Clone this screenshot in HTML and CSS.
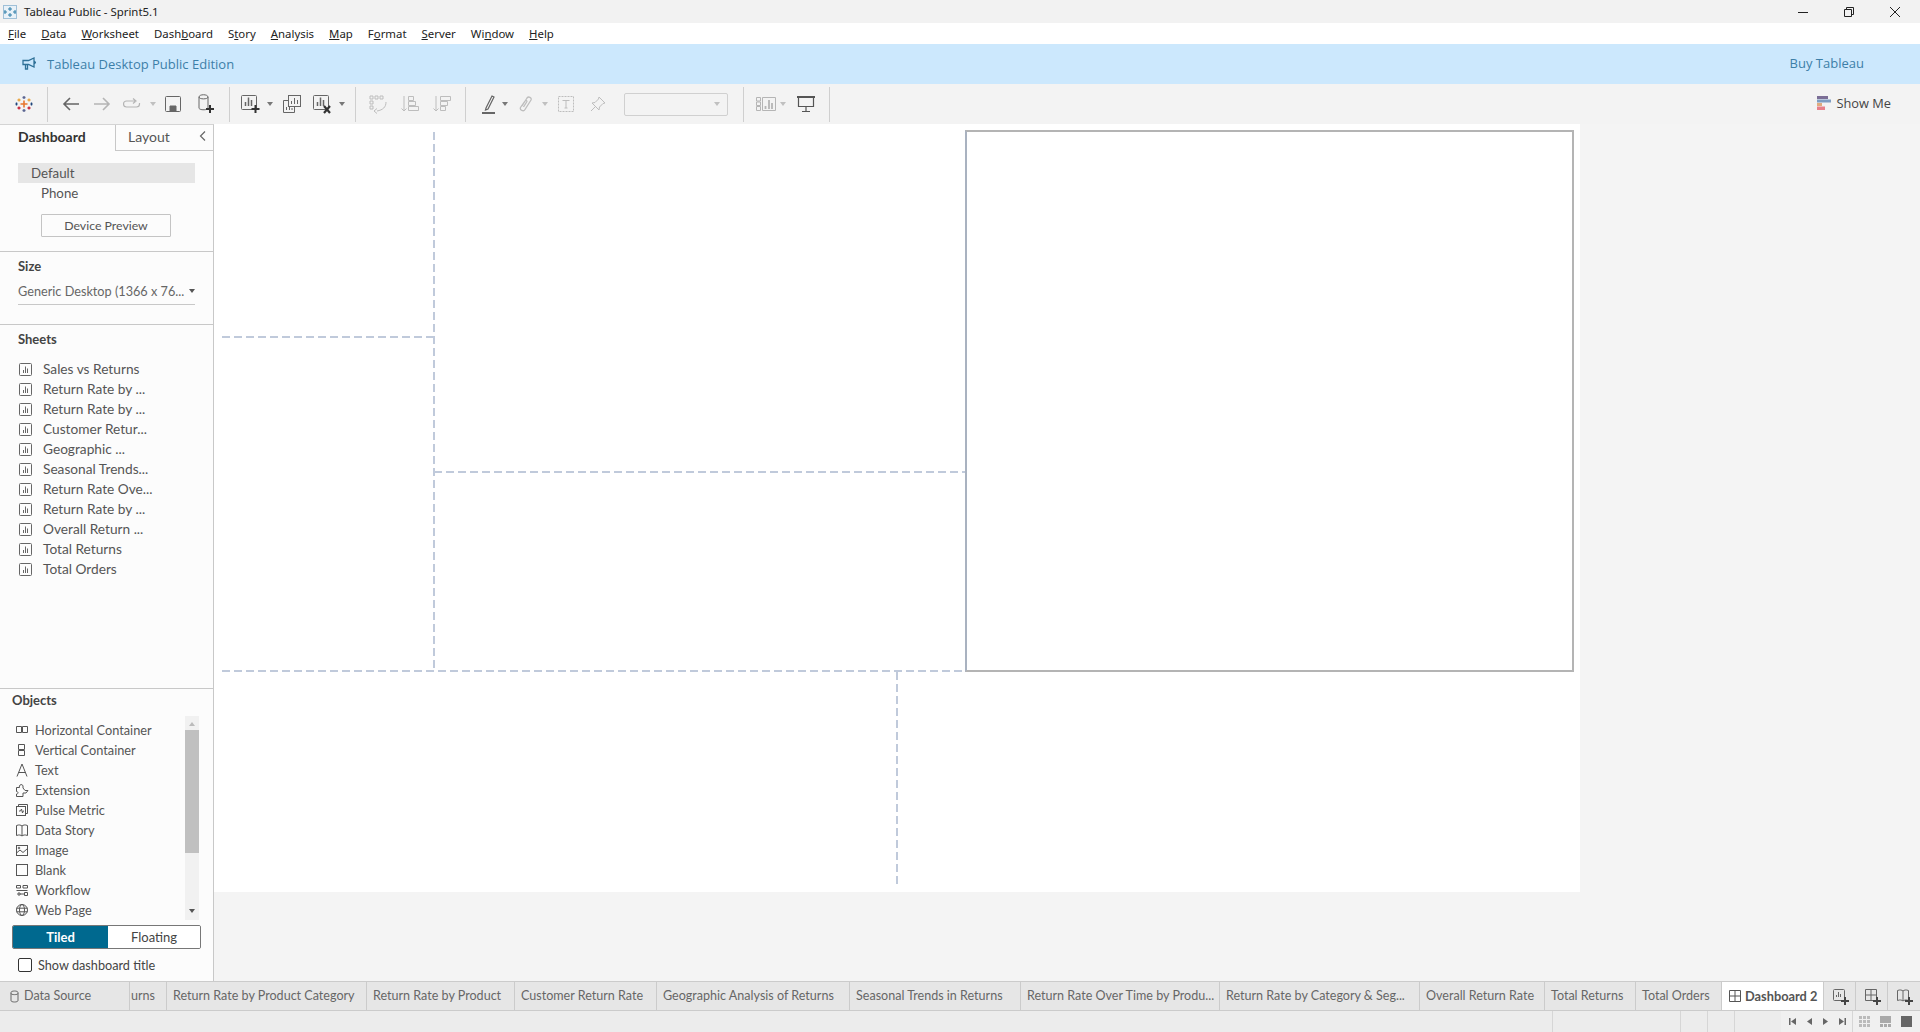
FILE: index.html
```html
<!DOCTYPE html>
<html lang="en">
<head>
<meta charset="utf-8">
<title>Tableau Public - Sprint5.1</title>
<link rel="stylesheet" href="styles.css">
</head>
<body>
<svg class="defs" width="0" height="0" aria-hidden="true">
  <symbol id="sheet" viewBox="0 0 13 13"><rect x=".5" y=".5" width="12" height="12" rx="1" fill="none" stroke="#666"/><path d="M4.500 7v3M6.500 3.500V10M8.500 5.500V10" stroke="#666" fill="none"/></symbol>
  <symbol id="tri" viewBox="0 0 6 4"><path d="M0 0h6L3 4z"/></symbol>
</svg>

<header class="titlebar">
  <svg class="app-logo" width="14" height="14" viewBox="0 0 14 14"><rect x=".5" y=".5" width="13" height="13" fill="#e8f1f8" stroke="#9fc0d8"/><path d="M7 2v4M5 4h4M7 8v4M5 10h4M2 5v4M1 7h3M12 5v4M10 7h3" stroke="#2f7ea8" fill="none"/></svg>
  <span class="app-title">Tableau Public - Sprint5.1</span>
  <div class="win-controls">
    <svg width="10" height="10" viewBox="0 0 10 10"><path d="M0 5.500h10" stroke="#222"/></svg>
    <svg width="10" height="10" viewBox="0 0 10 10"><path d="M.5 2.500h7v7h-7zM2.500 2.500v-2h7v7h-2" fill="none" stroke="#222"/></svg>
    <svg width="10" height="10" viewBox="0 0 10 10"><path d="M0 0l10 10M10 0L0 10" stroke="#222"/></svg>
  </div>
</header>

<nav class="menubar">
  <span><u>F</u>ile</span><span><u>D</u>ata</span><span><u>W</u>orksheet</span><span>Dash<u>b</u>oard</span><span>S<u>t</u>ory</span><span><u>A</u>nalysis</span><span><u>M</u>ap</span><span>F<u>o</u>rmat</span><span><u>S</u>erver</span><span>Wi<u>n</u>dow</span><span><u>H</u>elp</span>
</nav>

<div class="banner">
  <svg width="14" height="13" viewBox="0 0 14 13"><path d="M1 3.500h5.500L12 1v9L6.500 7.500H1zM3.500 7.500V12h2V7.500M12 4l1.500 1.500L12 7" fill="none" stroke="#2f7198" stroke-width="1.300"/></svg>
  <span class="banner-text">Tableau Desktop Public Edition</span>
  <span class="banner-buy">Buy Tableau</span>
</div>

<div class="toolbar">
  <div class="tb-group g1">
    <span class="cell"><svg width="18" height="18" viewBox="0 0 18 18" fill="none" stroke-width="1.300"><path d="M9 5.500v7M5.500 9h7" stroke="#e8762d" stroke-width="1.600"/><path d="M9 1v3M7.500 2.500h3M9 14v3M7.500 15.500h3" stroke="#5b6591"/><path d="M4 3.500v3M2.500 5h3M14 3.500v3M12.500 5h3" stroke="#e8a33d"/><path d="M4 11.500v3M2.500 13h3M14 11.500v3M12.500 13h3" stroke="#c72035"/><path d="M1.500 7.500v3M.5 9h2M16.500 7.500v3M15.500 9h2" stroke="#1f447a"/></svg></span>
  </div>
  <div class="tb-group g2">
    <span class="cell w32"><svg width="17" height="14" viewBox="0 0 17 14" fill="none" stroke="#666" stroke-width="1.600"><path d="M17 7H2M8 1L2 7l6 6"/></svg></span>
    <span class="cell w32"><svg width="17" height="14" viewBox="0 0 17 14" fill="none" stroke="#b5b5b5" stroke-width="1.600"><path d="M0 7h15M9 1l6 6-6 6"/></svg></span>
    <span class="cell w28"><svg width="18" height="12" viewBox="0 0 18 12" fill="none" stroke="#b5b5b5" stroke-width="1.200"><path d="M12 3H3.500a3 3 0 0 0 0 6h10a3 3 0 0 0 3-3V5M10 .5L13 3l-3 2.500"/></svg></span>
    <span class="cell w14"><svg class="dd dd-off"><use href="#tri"/></svg></span>
    <span class="cell w26"><svg width="16" height="16" viewBox="0 0 16 16" fill="none" stroke="#666"><rect x=".5" y=".5" width="15" height="15" rx="1"/><path d="M5 10h6v5.500H5z" fill="#666"/></svg></span>
    <span class="cell w40"><svg width="16" height="20" viewBox="0 0 16 20" fill="none" stroke="#666"><path d="M1 3c0-3 9-3 9 0v11c0 2-5 2-7 1.500-1-.3-2-.7-2-1.500zM1 3c0 2.500 9 2.500 9 0"/><path d="M12 11v8M8 15h8" stroke="#333" stroke-width="2"/></svg></span>
  </div>
  <div class="tb-group g3">
    <span class="cell w33"><svg width="20" height="20" viewBox="0 0 20 20" fill="none" stroke="#666"><rect x=".5" y="1.500" width="15" height="14" rx="1"/><path d="M4.500 12V8M7.500 12V3.500M10.500 12V6" stroke-width="1.500"/><path d="M14.500 11v8M10.500 15h8" stroke="#333" stroke-width="2"/></svg></span>
    <span class="cell w6"><svg class="dd"><use href="#tri"/></svg></span>
    <span class="cell w37"><svg width="18" height="18" viewBox="0 0 18 18" fill="none" stroke="#666"><rect x="5.500" y=".5" width="12" height="11" fill="#f3f3f3"/><path d="M8.500 9V6M11.500 9V3M14.500 9V5"/><path d="M5.500 5.500h-5v12h11v-6M3.500 15v-3M6.500 15v-3M9 15v-2"/></svg></span>
    <span class="cell w25"><svg width="20" height="20" viewBox="0 0 20 20" fill="none" stroke="#666"><rect x=".5" y="1.500" width="15" height="14" rx="1"/><path d="M4.500 12V8M7.500 12V3.500M10.500 12V6" stroke-width="1.500"/><path d="M11 12l6 7M17 12l-6 7" stroke="#333" stroke-width="2.200"/></svg></span>
    <span class="cell w14"><svg class="dd"><use href="#tri"/></svg></span>
  </div>
  <div class="tb-group g4">
    <span class="cell w32"><svg width="18" height="19" viewBox="0 0 18 19" fill="none" stroke="#bdbdbd"><path d="M1 1h3v3H1zM6 1h3v3H6zM11 1h3v3h-3zM1 6h3v3H1zM1 11h3v3H1zM17 7c0 5-3 8-9 9M8 13.500L5 16l3 2.500"/></svg></span>
    <span class="cell w32"><svg width="18" height="18" viewBox="0 0 18 18" fill="none" stroke="#bdbdbd"><path d="M3 1v15M.5 13.500L3 16l2.500-2.500"/><path d="M7.500 1.500h5v4h-5zM7.500 6.500h7v4h-7zM7.500 11.500h10v4h-10z"/></svg></span>
    <span class="cell w32"><svg width="18" height="18" viewBox="0 0 18 18" fill="none" stroke="#bdbdbd"><path d="M3 1v15M.5 13.500L3 16l2.500-2.500"/><path d="M7.500 1.500h10v4h-10zM7.500 6.500h7v4h-7zM7.500 11.500h5v4h-5z"/></svg></span>
  </div>
  <div class="tb-group g5">
    <span class="cell w28"><svg width="13" height="20" viewBox="0 0 13 20" fill="none" stroke="#666"><path d="M4 14l6-12 2 1-6 12-2.500 1z" stroke-width="1.200"/><path d="M0 19h13" stroke-width="2"/></svg></span>
    <span class="cell w6"><svg class="dd"><use href="#tri"/></svg></span>
    <span class="cell w35"><svg width="14" height="18" viewBox="0 0 14 18" fill="none" stroke="#bdbdbd" stroke-width="1.300"><path d="M3 11l5-8c1.500-2 5-.5 4 2l-6 9.500c-1.500 2.500-5.500.5-4.500-2L6 6c.6-1 2.300-.3 1.800.8L4.500 12"/></svg></span>
    <span class="cell w4"><svg class="dd dd-off"><use href="#tri"/></svg></span>
    <span class="cell w38"><svg width="16" height="16" viewBox="0 0 16 16" fill="none" stroke="#bdbdbd"><rect x=".5" y=".5" width="15" height="15" stroke-dasharray="2 1"/><path d="M4.500 4.500h7M8 4.500v7.500M6.500 12h3"/></svg></span>
    <span class="cell w25"><svg width="16" height="16" viewBox="0 0 16 16" fill="none" stroke="#bdbdbd"><path d="M9 1l6 6-2 .5L9.500 11l-.5 3-7-7 3-.5L8.500 3zM5 11l-4 4"/></svg></span>
    <div class="combo"><svg class="dd dd-off"><use href="#tri"/></svg></div>
  </div>
  <div class="tb-group g6">
    <span class="cell w30"><svg width="20" height="14" viewBox="0 0 20 14" fill="none" stroke="#b5b5b5"><path d="M.5.500h4v3.500h-4zM.5 5h4v3.500h-4zM.5 9.500h4V13.500h-4zM6.500.5h13v13h-13z"/><path d="M9.500 12V9M13 12V3M16 12V6" stroke-width="1.800"/></svg></span>
    <span class="cell w4"><svg class="dd dd-off"><use href="#tri"/></svg></span>
    <span class="cell w41"><svg width="18" height="16" viewBox="0 0 18 16" fill="none" stroke="#555" stroke-width="1.200"><path d="M0 1h18" stroke-width="2"/><path d="M1.500 1v9.500h15V1M9 10.500V15M5 15.500h8"/></svg></span>
  </div>
  <div class="showme">
    <svg width="14" height="14" viewBox="0 0 14 14"><path fill="#7b6e96" d="M0 0h11v3H0z"/><path fill="#7e9dc2" d="M0 3.500h14v3H0z"/><path fill="#e0ab7e" d="M0 7h5v3H0z"/><path fill="#e8808a" d="M0 10.500h8V14H0z"/></svg>
    <span>Show Me</span>
  </div>
</div>

<div class="main">
  <aside class="sidebar">
    <div class="side-tabs">
      <div class="side-tab active">Dashboard</div>
      <div class="side-tab">Layout<svg class="collapse" width="7" height="10" viewBox="0 0 7 10" fill="none" stroke="#666" stroke-width="1.200"><path d="M6 .5L1.500 5 6 9.500"/></svg></div>
    </div>
    <section class="sec device">
      <div class="dev-row selected">Default</div>
      <div class="dev-row phone">Phone</div>
      <button class="dev-btn">Device Preview</button>
    </section>
    <section class="sec size">
      <h3>Size</h3>
      <div class="size-select"><span>Generic Desktop (1366 x 76...</span><svg class="dd dark"><use href="#tri"/></svg></div>
    </section>
    <section class="sec sheets">
      <h3>Sheets</h3>
      <ul class="list">
        <li><svg width="13" height="13"><use href="#sheet"/></svg>Sales vs Returns</li>
        <li><svg width="13" height="13"><use href="#sheet"/></svg>Return Rate by ...</li>
        <li><svg width="13" height="13"><use href="#sheet"/></svg>Return Rate by ...</li>
        <li><svg width="13" height="13"><use href="#sheet"/></svg>Customer Retur...</li>
        <li><svg width="13" height="13"><use href="#sheet"/></svg>Geographic ...</li>
        <li><svg width="13" height="13"><use href="#sheet"/></svg>Seasonal Trends...</li>
        <li><svg width="13" height="13"><use href="#sheet"/></svg>Return Rate Ove...</li>
        <li><svg width="13" height="13"><use href="#sheet"/></svg>Return Rate by ...</li>
        <li><svg width="13" height="13"><use href="#sheet"/></svg>Overall Return ...</li>
        <li><svg width="13" height="13"><use href="#sheet"/></svg>Total Returns</li>
        <li><svg width="13" height="13"><use href="#sheet"/></svg>Total Orders</li>
      </ul>
    </section>
    <section class="objects">
      <h3>Objects</h3>
      <div class="obj-wrap">
        <ul class="list obj-list">
          <li><svg width="14" height="14" viewBox="0 0 14 14" fill="none" stroke="#555"><path d="M1.500 3.500h5v6h-5zM7.500 3.500h5v6h-5z"/></svg>Horizontal Container</li>
          <li><svg width="14" height="14" viewBox="0 0 14 14" fill="none" stroke="#555"><path d="M3.500 1.500h6v5h-6zM3.500 7.500h6v5h-6z"/></svg>Vertical Container</li>
          <li><svg width="14" height="14" viewBox="0 0 14 14" fill="none" stroke="#555"><path d="M2 13.500L7 1l5 12.500M3.500 9.500h7"/></svg>Text</li>
          <li><svg width="14" height="14" viewBox="0 0 14 14" fill="none" stroke="#555"><path d="M1.500 4.500h3c-1-3 3-4 3.500-1.500L8 5l2 2.500h3L11 10H8v3.500H1.500V11c2 0 2-2.500 0-2.500z"/></svg>Extension</li>
          <li><svg width="14" height="14" viewBox="0 0 14 14" fill="none" stroke="#555"><rect x="1.500" y="3.500" width="9" height="9"/><path d="M3.500 3.500v-2h9v9h-2M4 8h1.500l1-2 1 4 .7-2H9"/></svg>Pulse Metric</li>
          <li><svg width="14" height="14" viewBox="0 0 14 14" fill="none" stroke="#555"><path d="M1.500 2.500C4 1.500 6 2 7 3c1-1 3-1.500 5.500-.5v10c-2.500-1-4.500-.5-5.500.5-1-1-3-1.500-5.500-.5zM7 3v10"/></svg>Data Story</li>
          <li><svg width="14" height="14" viewBox="0 0 14 14" fill="none" stroke="#555"><rect x="1.500" y="2.500" width="11" height="10"/><path d="M1.500 10l3.500-3 3 2.500 4.500-4"/><circle cx="4" cy="5" r=".8"/></svg>Image</li>
          <li><svg width="14" height="14" viewBox="0 0 14 14" fill="none" stroke="#555"><rect x="1.500" y="1.500" width="11" height="11"/></svg>Blank</li>
          <li><svg width="14" height="14" viewBox="0 0 14 14" fill="none" stroke="#555"><path d="M1.500 2.500h4v2.500h-4zM8 2.500h4.500v2.500H8zM1.500 7.500h11M3 10h2v2H3zM9.500 9.500h3v3h-3zM5 11h4.500"/></svg>Workflow</li>
          <li><svg width="14" height="14" viewBox="0 0 14 14" fill="none" stroke="#555"><circle cx="7" cy="7" r="5.500"/><ellipse cx="7" cy="7" rx="2.500" ry="5.500"/><path d="M1.500 5.200h11M1.500 8.800h11"/></svg>Web Page</li>
        </ul>
        <div class="scroll">
          <svg class="dd off-up"><use href="#tri"/></svg>
          <div class="thumb"></div>
          <svg class="dd dark"><use href="#tri"/></svg>
        </div>
      </div>
      <div class="segment"><span class="seg on">Tiled</span><span class="seg">Floating</span></div>
      <label class="title-check"><span class="box"></span>Show dashboard title</label>
    </section>
  </aside>

  <main class="workspace">
    <div class="sheet">
      <i class="dash v v1"></i>
      <i class="dash h h1"></i>
      <i class="dash h h2"></i>
      <i class="dash h h3"></i>
      <i class="dash v v2"></i>
      <div class="selection"></div>
    </div>
  </main>
</div>

<div class="tabbar">
  <div class="tab t-ds"><svg width="9" height="13" viewBox="0 0 9 13" fill="none" stroke="#666"><path d="M1 2.500c0-2 7-2 7 0v8c0 2-7 2-7 0zM1 3.500c0 1.500 7 1.500 7 0"/></svg><span>Data Source</span></div>
  <div class="tab t-clip">urns</div>
  <div class="tab t200">Return Rate by Product Category</div>
  <div class="tab t148">Return Rate by Product</div>
  <div class="tab t142">Customer Return Rate</div>
  <div class="tab t193">Geographic Analysis of Returns</div>
  <div class="tab t171">Seasonal Trends in Returns</div>
  <div class="tab t199">Return Rate Over Time by Produ...</div>
  <div class="tab t200b">Return Rate by Category &amp; Seg...</div>
  <div class="tab t125">Overall Return Rate</div>
  <div class="tab t91">Total Returns</div>
  <div class="tab t86">Total Orders</div>
  <div class="tab t-active"><svg width="12" height="12" viewBox="0 0 12 12" fill="none" stroke="#555"><path d="M.5.500h11v11H.5zM6 .5v11M.5 6h11"/></svg><span>Dashboard 2</span></div>
  <div class="tab t-add"><svg width="16" height="16" viewBox="0 0 16 16" fill="none" stroke="#666"><rect x=".5" y=".5" width="11" height="11" rx="1"/><path d="M3.500 8V6M5.500 8V3M7.500 8V5"/><path d="M12 8v8M8 12h8" stroke="#444" stroke-width="2"/></svg></div>
  <div class="tab t-add"><svg width="16" height="16" viewBox="0 0 16 16" fill="none" stroke="#666"><path d="M.5.500h11v11H.5zM6 .5v11M.5 6h11"/><path d="M12 8v8M8 12h8" stroke="#444" stroke-width="2"/></svg></div>
  <div class="tab t-add"><svg width="16" height="16" viewBox="0 0 16 16" fill="none" stroke="#666"><path d="M.5 1.500C3 .5 5 1 6 2c1-1 3-1.500 5.500-.5v10c-2.500-1-4.500-.5-5.500.5-1-1-3-1.500-5.500-.5zM6 2v10"/><path d="M12 8v8M8 12h8" stroke="#444" stroke-width="2"/></svg></div>
</div>

<footer class="statusbar">
  <div class="st st1"></div>
  <div class="st st2"></div>
  <div class="st st3"></div>
  <div class="st st3"></div>
  <div class="st st4"></div>
  <div class="st-nav">
    <svg width="7" height="7" viewBox="0 0 7 7" fill="#666"><path d="M0 0h1.500v7H0zM7 0v7L2 3.500z"/></svg>
    <svg width="5" height="7" viewBox="0 0 5 7" fill="#666"><path d="M5 0v7L0 3.500z"/></svg>
    <svg width="5" height="7" viewBox="0 0 5 7" fill="#666"><path d="M0 0v7l5-3.500z"/></svg>
    <svg width="7" height="7" viewBox="0 0 7 7" fill="#666"><path d="M0 0v7l5-3.500zM5.500 0H7v7H5.500z"/></svg>
  </div>
  <div class="st-views">
    <svg width="11" height="11" viewBox="0 0 11 11" fill="#bbb"><path d="M0 0h3v3H0zM4 0h3v3H4zM8 0h3v3H8zM0 4h3v3H0zM4 4h3v3H4zM8 4h3v3H8zM0 8h3v3H0zM4 8h3v3H4zM8 8h3v3H8z"/></svg>
    <svg width="11" height="11" viewBox="0 0 11 11" fill="#aaa"><path d="M0 0h11v7H0zM0 8h3v3H0zM4 8h3v3H4zM8 8h3v3H8z"/></svg>
    <svg width="11" height="11" viewBox="0 0 11 11" fill="#666"><path d="M0 0h11v11H0z"/></svg>
  </div>
</footer>
</body>
</html>
```
FILE: styles.css
```css
* { box-sizing: border-box; }
html, body { margin: 0; height: 100%; }
body {
  width: 1920px;
  height: 1032px;
  overflow: hidden;
  display: flex;
  flex-direction: column;
  background: #f4f4f4;
  color: #555;
  font: 13px/1 Lato, "Open Sans", sans-serif;
}
.defs { position: absolute; }
ul { list-style: none; margin: 0; padding: 0; }
h3 { margin: 0; font-size: 13px; font-weight: 700; color: #444; }
svg { display: block; flex: none; }

.titlebar {
  height: 23px;
  flex: none;
  display: flex;
  align-items: center;
  padding-left: 3px;
  background: #f2f2f2;
}
.app-title {
  margin-left: 7px;
  font: 11.400px "Noto Sans", sans-serif;
  color: #222;
}
.win-controls {
  margin-left: auto;
  display: flex;
  gap: 36px;
  padding-right: 20px;
}

.menubar {
  height: 21px;
  flex: none;
  display: flex;
  align-items: center;
  gap: 15px;
  padding-left: 8px;
  background: #fff;
  font: 11.400px "Noto Sans", sans-serif;
  color: #222;
}

.banner {
  height: 40px;
  flex: none;
  display: flex;
  align-items: center;
  padding: 0 56px 1px 22px;
  background: #cce8fd;
  font: 13px "Open Sans", sans-serif;
  color: #3d7fa8;
}
.banner-text { margin-left: 11px; }
.banner-buy { margin-left: auto; padding-bottom: 2px; }

.toolbar {
  height: 40px;
  flex: none;
  display: flex;
  align-items: center;
  background: #f3f3f3;
}
.tb-group {
  height: 35px;
  display: flex;
  align-items: center;
  border-right: 1px solid #cfcfcf;
}
.g1 { width: 48px; justify-content: center; }
.g2 { width: 182px; padding-left: 6px; }
.g3 { width: 126px; padding-left: 4px; }
.g4 { width: 110px; padding-left: 6px; }
.g5 { width: 278px; padding-left: 8px; }
.g6 { width: 86px; padding-left: 7px; }
.cell { display: flex; justify-content: center; align-items: center; height: 24px; }
.w4 { width: 4px; }
.w6 { width: 6px; }
.w14 { width: 14px; }
.w25 { width: 25px; }
.w26 { width: 26px; }
.w28 { width: 28px; }
.w30 { width: 30px; }
.w32 { width: 32px; }
.w33 { width: 33px; }
.w35 { width: 35px; }
.w37 { width: 37px; }
.w38 { width: 38px; }
.w40 { width: 40px; }
.w41 { width: 41px; }
.dd { width: 6px; height: 4px; fill: #777; }
.dd-off { fill: #c0c0c0; }
.dd.dark { fill: #555; }
.combo {
  width: 104px;
  height: 23px;
  margin-left: 14px;
  padding-right: 7px;
  display: flex;
  align-items: center;
  justify-content: flex-end;
  border: 1px solid #d0d0d0;
  border-radius: 2px;
}
.showme {
  margin-left: auto;
  margin-right: 29px;
  padding-bottom: 2px;
  display: flex;
  align-items: center;
  gap: 6px;
  font: 12.800px "Open Sans", sans-serif;
  color: #444;
}

.main { flex: 1; min-height: 0; display: flex; }

.sidebar {
  width: 214px;
  flex: none;
  display: flex;
  flex-direction: column;
  background: #fcfcfc;
  border-right: 1px solid #c8c8c8;
  border-top: 1px solid #d4d4d4;
}
.side-tabs { height: 26px; flex: none; display: flex; }
.side-tab {
  position: relative;
  font-size: 14px;
  line-height: 24px;
}
.side-tab.active {
  width: 116px;
  padding-left: 18px;
  font-weight: 700;
  color: #333;
  border-right: 1px solid #c8c8c8;
}
.side-tab:not(.active) {
  flex: 1;
  padding-left: 12px;
  color: #555;
  border-bottom: 1px solid #c8c8c8;
}
.collapse { position: absolute; right: 7px; top: 6px; }

.sec { flex: none; border-bottom: 1px solid #c8c8c8; }
.sec h3 { padding: 0 18px; }
.device { height: 101px; padding: 12px 18px 0; }
.dev-row { height: 20px; line-height: 20px; font-size: 13.300px; }
.dev-row.selected { padding-left: 13px; background: #e6e6e6; }
.dev-row.phone { padding-left: 23px; }
.dev-btn {
  display: block;
  width: 130px;
  height: 23px;
  margin: 11px 0 0 23px;
  padding: 0;
  background: #fcfcfc;
  border: 1px solid #c4c4c4;
  border-radius: 1px;
  font: 12.300px Lato, sans-serif;
  color: #555;
}
.size { height: 73px; padding-top: 8px; }
.size-select {
  display: flex;
  align-items: center;
  justify-content: space-between;
  height: 27px;
  margin: 5px 18px 0;
  border-bottom: 1px solid #c8c8c8;
  font-size: 12.700px;
  color: #666;
}
.sheets { height: 364px; padding-top: 8px; }
.list { margin-top: 13px; }
.list li {
  height: 20px;
  display: flex;
  align-items: center;
  gap: 11px;
  font-size: 13.700px;
  color: #555;
}
.sheets .list { padding-left: 19px; }

.objects { flex: 1; min-height: 0; padding-top: 5px; }
.objects h3 { padding-left: 12px; }
.obj-wrap { display: flex; height: 208px; margin-top: 9px; }
.obj-list { flex: 1; margin-top: 4px; padding-left: 15px; }
.obj-list li { gap: 6px; font-size: 12.750px; color: #555; }
.scroll {
  width: 14px;
  margin-right: 14px;
  height: 204px;
  display: flex;
  flex-direction: column;
  align-items: center;
  justify-content: space-between;
  padding: 6px 0 0;
  background: #f1f1f1;
}
.off-up { transform: rotate(180deg); fill: #bbb; }
.thumb { width: 100%; height: 123px; margin-top: 4px; margin-bottom: auto; background: #c0c0c0; }
.scroll .dd.dark { margin-bottom: 7px; }
.segment {
  display: flex;
  width: 189px;
  height: 24px;
  margin: 1px 0 0 12px;
  border: 1px solid #777;
  border-radius: 2px;
  overflow: hidden;
  font-size: 13px;
}
.seg { flex: 1; display: flex; align-items: center; justify-content: center; background: #fff; color: #444; }
.seg.on { flex: none; width: 95px; background: #00698f; color: #fff; font-weight: 700; }
.title-check { display: flex; align-items: center; gap: 6px; margin: 9px 0 0 18px; font-size: 12.700px; color: #444; }
.box { width: 14px; height: 14px; border: 1px solid #333; border-radius: 2px; background: #fff; }

.workspace { flex: 1; min-width: 0; }
.sheet {
  position: relative;
  width: 1366px;
  height: 768px;
  background: #fff;
}
.dash { position: absolute; display: block; }
.dash.v { width: 2px; background: repeating-linear-gradient(180deg, #c0cadb 0 8px, transparent 8px 12px); }
.dash.h { height: 2px; background: repeating-linear-gradient(90deg, #c0cadb 0 8px, transparent 8px 12px); }
.v1 { left: 219px; top: 8px; height: 538px; }
.h1 { left: 8px; top: 212px; width: 212px; }
.h2 { left: 220px; top: 347px; width: 532px; }
.h3 { left: 8px; top: 546px; width: 744px; }
.v2 { left: 682px; top: 548px; height: 213px; }
.selection {
  position: absolute;
  left: 751px;
  top: 6px;
  width: 609px;
  height: 542px;
  border: 2px solid #b4b4b4;
  border-left-color: #a9b2c0;
}

.tabbar {
  height: 30px;
  flex: none;
  display: flex;
  background: #e6e6e6;
  border-top: 1px solid #cbcbcb;
  border-bottom: 1px solid #cbcbcb;
  margin-top: -1px;
  position: relative;
}
.tab {
  flex: none;
  display: flex;
  align-items: center;
  padding-left: 6px;
  padding-top: 1px;
  border-right: 1px solid #cbcbcb;
  font-size: 12.550px;
  color: #666;
  white-space: nowrap;
  overflow: hidden;
}
.t-ds { width: 130px; padding-left: 10px; gap: 5px; }
.t-clip { width: 37px; padding-left: 0; justify-content: flex-end; padding-right: 11px; }
.t200 { width: 200px; }
.t148 { width: 148px; }
.t142 { width: 142px; }
.t193 { width: 193px; }
.t171 { width: 171px; }
.t199 { width: 199px; }
.t200b { width: 200px; }
.t125 { width: 125px; }
.t91 { width: 91px; }
.t86 { width: 86px; }
.t-active {
  width: 102px;
  gap: 4px;
  padding: 0 0 0 7px;
  background: #fff;
  color: #555;
  font-size: 12.800px;
  font-weight: 700;
}
.t-add { width: 32px; padding-left: 9px; }
.t-add:last-child { border-right: 0; }

.statusbar {
  height: 21px;
  flex: none;
  display: flex;
  background: #ececec;
}
.st { flex: none; height: 100%; border-right: 1px solid #d6d6d6; }
.st1 { width: 1553px; }
.st2 { width: 128px; }
.st3 { width: 27px; }
.st4 { width: 46px; border-right: 0; }
.st-nav {
  width: 71px;
  display: flex;
  align-items: center;
  gap: 11px;
  padding-left: 8px;
  background: #f0f0f0;
}
.st-views {
  flex: 1;
  display: flex;
  align-items: center;
  gap: 10px;
  padding-left: 6px;
  background: #f0f0f0;
  border-left: 1px solid #d6d6d6;
}
```
